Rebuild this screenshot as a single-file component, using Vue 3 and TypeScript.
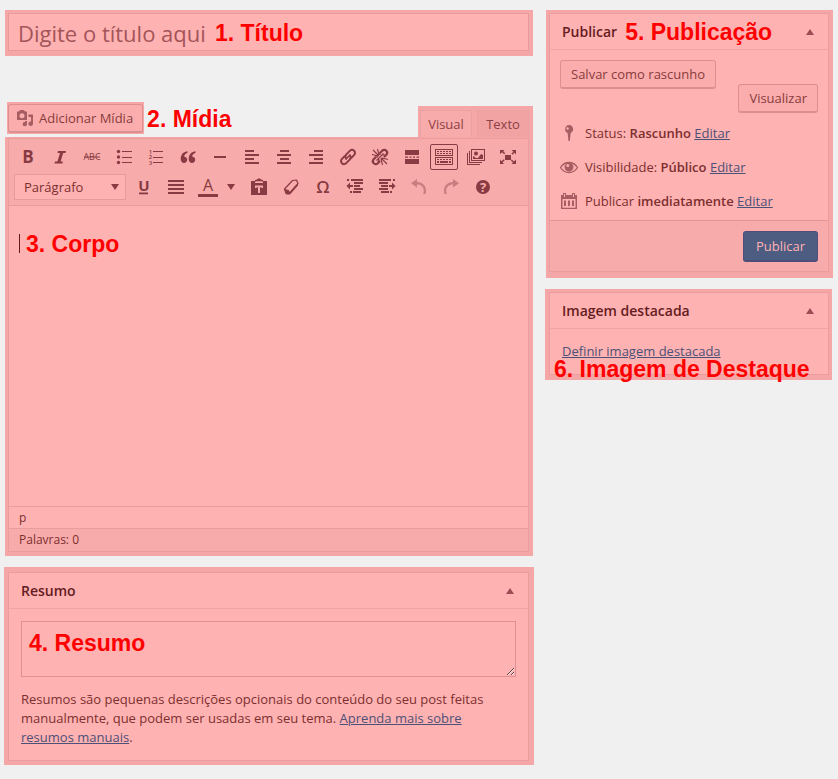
<script setup lang="ts">
import { ref } from 'vue'

interface Tool {
  label: string
  icon: string
  active?: boolean
  disabled?: boolean
}

const icons: Record<string, string> = {
  bold: '<text class="g" x="10" y="16" font-size="17" font-weight="700">B</text>',
  italic: '<path d="M8 4h8l-.5 2h-2.300l-2.600 8.500h2.300l-.5 2H4.500l.5-2h2.400L10 6H7.500z"/>',
  strike: '<text class="g" x="10" y="13" font-size="9">ABC</text><path d="M2 9.500h16v1H2z"/>',
  ul: '<circle cx="4.500" cy="4.500" r="1.700"/><circle cx="4.500" cy="10" r="1.700"/><circle cx="4.500" cy="15.500" r="1.700"/><path d="M8 4h10v1H8zM8 10h10v1H8zM8 15h10v1H8z"/>',
  ol: '<text class="g" x="4.500" y="6.500" font-size="6" font-weight="600">1</text><text class="g" x="4.500" y="12" font-size="6" font-weight="600">2</text><text class="g" x="4.500" y="18" font-size="6" font-weight="600">3</text><path d="M7 4h10v1H7zM7 10h10v1H7zM7 15h10v1H7z"/>',
  quote: '<path d="M9.500 4.200C6 4.500 2.700 7 2.700 11.800c0 2.700 1.400 4.200 3.300 4.200 1.800 0 3.200-1.300 3.200-3.200S7.900 9.700 6.300 9.700C6 8 7.400 6.300 9.500 5.900zM17.500 4.200c-3.500.3-6.800 2.800-6.800 7.600 0 2.700 1.400 4.200 3.300 4.200 1.800 0 3.200-1.300 3.200-3.200s-1.300-3.100-2.900-3.100c-.3-1.700 1.100-3.400 3.200-3.800z"/>',
  rule: '<path d="M4 9h12v2H4z"/>',
  left: '<path d="M3 3h9v2H3zM3 7h14v2H3zM3 11h9v2H3zM3 15h14v2H3z"/>',
  center: '<path d="M6 3h9v2H6zM3 7h14v2H3zM6 11h9v2H6zM3 15h14v2H3z"/>',
  right: '<path d="M8 3h9v2H8zM3 7h14v2H3zM8 11h9v2H8zM3 15h14v2H3z"/>',
  justify: '<path d="M2 3h16v2H2zM2 7h16v2H2zM2 11h16v2H2zM2 15h16v2H2z"/>',
  link: '<g fill="none" stroke="currentColor" stroke-width="2" stroke-linecap="round"><path d="M8.200 11.400c-1.400-1.400-1-2.900.1-4l3.500-3.500c1.300-1.300 3.100-1.300 4.300-.1s1.200 3-.1 4.300l-2.600 2.600"/><path d="M11.800 8.600c1.400 1.400 1 2.900-.1 4l-3.500 3.500c-1.300 1.300-3.100 1.300-4.300.1s-1.200-3 .1-4.300l2.600-2.600"/></g><path d="m7 12 5-5 1 1-5 5z"/>',
  unlink: '<g fill="none" stroke="currentColor" stroke-width="2.200" stroke-linecap="round"><path d="m10.500 5.500 1.700-1.700c1.200-1.200 3-1.200 4.100-.1s1.100 2.800 0 4.100l-1.700 1.700M9.500 14.500l-1.700 1.700c-1.200 1.200-3 1.200-4.100.1s-1.100-2.800 0-4.100l1.700-1.700"/></g><path d="M3 3l6 6M7.500 2l1.500 6M2 7.500l6 1.500M11 11l6 6M11 12l1.500 6M12 11l6 1.500M13.500 6.500l-7 7M9 12l-1 3M12 8l3 0M8 10H5M10 5v3" stroke="currentColor" stroke-width="1.100"/>',
  more: '<path d="M3 3h14v5H3zM3 12h14v5H3zM3 9.500h3v1.200H3zM7.500 9.500h2v1.200h-2zM11 9.500h2v1.200h-2zM14.500 9.500H17v1.200h-2.500z"/>',
  kitchen: '<path fill-rule="evenodd" d="M1 2h18v7H1zm1 1v5h16V3zM1 10h18v8H1zm1 1v6h16v-6z"/><path d="M3 4h2v1H3zM6 4h2v1H6zM9 4h2v1H9zM12 4h2v1h-2zM15 4h2v1h-2zM3 6h2v1H3zM6 6h2v1H6zM9 6h2v1H9zM12 6h2v1h-2zM15 6h2v1h-2zM3 12h2v1H3zM6 12h2v1H6zM9 12h2v1H9zM12 12h2v1h-2zM15 12h2v1h-2zM3 14h2v2H3zM6 14h8v2H6zM15 14h2v2h-2z"/>',
  gallery: '<path fill-rule="evenodd" d="M5 2h14v12H5zm1 1v10h12V3z"/><path d="M3 4h1v11h12v1H3zM1 6h1v11h12v1H1zM7 12V9l3 2h2l3-4 2 1v4z"/><circle cx="10" cy="6.500" r="2"/>',
  full: '<path d="M7 8h6v5H7zM2 3h4.500L5.200 4.300l2 2-1 1-2-2L2 7zM18 3v4.500l-1.600-1.700-2 2-1-1 2-2L13.500 3zM2 17v-4.500l1.500 1.700 2.200-2 1 1-2.200 2L6 17zM18 17h-4.500l1.500-1.500-2.200-2 1-1 2.200 2 2-2z"/>',
  underline: '<text class="g" x="10" y="14" font-size="15" font-weight="700">U</text><path d="M5 15.500h9v1.800H5z"/>',
  color: '<text class="g" x="10" y="14" font-size="16">A</text><path d="M0 17h20v3H0z"/>',
  paste: '<path d="M2 4h4V3l2-.5C8.300 1 11.700 1 12 2.500l2 .5v1h4v14H2z"/><path d="M6 6h8V4.800l-1.500-.5h-5L6 4.800zM6 8.500h8V11h-1.500v-.8H11V16H9v-5.800H7.500v.8H6z" fill="#f8abab"/>',
  eraser: '<path fill="none" stroke="currentColor" stroke-width="1.200" stroke-linejoin="round" d="M11.500 3.500 15.500 3 17 6.500 9 15.500 5 16.500 3.500 12z"/><path d="M3.500 12 7.800 13 9 15.500 16.500 7l.5 1.500-8 9H5.500z"/>',
  omega: '<text class="g" x="10" y="16" font-size="17" font-weight="600">Ω</text>',
  outdent: '<path d="M6 2h12v2H6zM9 5h9v2H9zM9 8h6v2H9zM9 11h9v2H9zM8 14h8v2H8zM1.500 9 5 5.500V8h3v2H5v2.500zM2 2h2v2H2zM5 14h2v2H5z"/>',
  indent: '<path d="M2 2h12v2H2zM2 5h9v2H2zM4 8h7v2H4zM2 11h9v2H2zM4 14h8v2H4zM18.500 9 15 5.500V8h-3v2h3v2.500zM16 2h2v2h-2zM13 14h2v2h-2z"/>',
  undo: '<path d="M8 2v3c5.500 0 9 3.500 9 9 0 1-.2 2-.5 3h-2.300c.4-1 .6-2 .6-3 0-4-2.500-6.500-6.800-6.500v3L2 6.300z"/>',
  redo: '<path d="M12 2v3c-5.500 0-9 3.500-9 9 0 1 .2 2 .5 3h2.300c-.4-1-.6-2-.6-3 0-4 2.500-6.500 6.800-6.500v3l6-4.200z"/>',
  help: '<circle cx="10" cy="10" r="7"/><text class="g" x="10" y="15" font-size="13" font-weight="700" fill="#f8abab">?</text>',
  pin: '<path fill-rule="evenodd" d="M10 2a4.200 4.200 0 0 1 1.700 8L10.800 18H9.500l-.9-8A4.200 4.200 0 0 1 10 2zM8.500 4.300a1.200 1.200 0 1 0 .1 2.400 1.200 1.200 0 0 0-.1-2.400z"/>',
  eye: '<path fill="none" stroke="currentColor" stroke-width="1.300" d="M1.500 10.500c2-3.200 5-5 8.500-5s6.500 1.800 8.500 5c-2 3.200-5 5-8.500 5s-6.500-1.800-8.500-5z"/><path fill-rule="evenodd" d="M10 5.600a4.500 4.500 0 1 1 0 9 4.500 4.500 0 0 1 0-9zM8.800 7a1.500 1.500 0 1 0 0 3 1.500 1.500 0 0 0 0-3z"/>',
  calendar: '<path fill-rule="evenodd" d="M2 4h2V2h3v2h6V2h3v2h2v14H2zm1.500 4v8.700h13V8zM5 3v3h1V3zm9 0v3h1V3z"/><path d="M5 9.500h2V15H5zM9 9.500h2V15H9zM13 9.500h2V15h-2z"/>',
  media: '<path fill-rule="evenodd" d="M2 3.500h2L5 2h4l1 1.500h2V12H2zm5 1.800A2.500 2.500 0 1 0 7 10.300 2.500 2.500 0 0 0 7 5.300z"/><path d="M13.500 6.500H18v9.300A2.300 2.300 0 1 1 16 13.500V9h-2.500zM12 13v3a2.200 2.200 0 1 1-2-2.100V13z"/>',
}

const rowOne: Tool[] = [
  { label: 'Negrito', icon: 'bold' },
  { label: 'Itálico', icon: 'italic' },
  { label: 'Tachado', icon: 'strike' },
  { label: 'Lista com marcadores', icon: 'ul' },
  { label: 'Lista numerada', icon: 'ol' },
  { label: 'Citação', icon: 'quote' },
  { label: 'Linha horizontal', icon: 'rule' },
  { label: 'Alinhar à esquerda', icon: 'left' },
  { label: 'Centralizar', icon: 'center' },
  { label: 'Alinhar à direita', icon: 'right' },
  { label: 'Inserir link', icon: 'link' },
  { label: 'Remover link', icon: 'unlink' },
  { label: 'Leia mais', icon: 'more' },
  { label: 'Alternar barra', icon: 'kitchen', active: true },
  { label: 'Galeria', icon: 'gallery' },
  { label: 'Tela cheia', icon: 'full' },
]
const rowTwoStart: Tool[] = [
  { label: 'Sublinhado', icon: 'underline' },
  { label: 'Justificar', icon: 'justify' },
  { label: 'Cor do texto', icon: 'color' },
]
const rowTwoEnd: Tool[] = [
  { label: 'Colar como texto', icon: 'paste' },
  { label: 'Limpar formatação', icon: 'eraser' },
  { label: 'Caractere especial', icon: 'omega' },
  { label: 'Diminuir recuo', icon: 'outdent' },
  { label: 'Aumentar recuo', icon: 'indent' },
  { label: 'Desfazer', icon: 'undo', disabled: true },
  { label: 'Refazer', icon: 'redo', disabled: true },
  { label: 'Ajuda', icon: 'help' },
]

const title = ref('')
const excerpt = ref('')
const format = ref('p')
const tab = ref<'visual' | 'texto'>('visual')

const statusRows = [
  { icon: 'pin', label: 'Status:', value: 'Rascunho' },
  { icon: 'eye', label: 'Visibilidade:', value: 'Público' },
  { icon: 'calendar', label: 'Publicar', value: 'imediatamente' },
]
</script>

<template>
  <div class="page">
    <main class="column">
      <section class="zone title-zone">
        <input v-model="title" class="title-input" type="text" aria-label="Título" placeholder="Digite o título aqui" />
        <strong class="note note-title">1. Título</strong>
      </section>

      <section class="editor">
        <div class="editor-head">
          <div class="media-zone">
            <button type="button" class="btn media-btn">
              <svg viewBox="0 0 20 20" class="icon" v-html="icons.media"></svg>Adicionar Mídia
            </button>
          </div>
          <strong class="note-inline">2. Mídia</strong>
          <div class="tabs">
            <button type="button" class="tab" :class="{ current: tab === 'visual' }" @click="tab = 'visual'">Visual</button>
            <button type="button" class="tab" :class="{ current: tab === 'texto' }" @click="tab = 'texto'">Texto</button>
          </div>
        </div>

        <div class="zone editor-zone">
          <div class="frame">
            <div class="toolbar">
              <div class="tool-row">
                <button v-for="t in rowOne" :key="t.icon" type="button" class="tool" :class="{ active: t.active }" :aria-label="t.label">
                  <svg viewBox="0 0 20 20" class="icon" v-html="icons[t.icon]"></svg>
                </button>
              </div>
              <div class="tool-row">
                <div class="format">
                  <select v-model="format" aria-label="Formato">
                    <option value="p">Parágrafo</option>
                    <option value="h1">Título 1</option>
                  </select>
                  <span class="caret-down"></span>
                </div>
                <button v-for="t in rowTwoStart" :key="t.icon" type="button" class="tool" :aria-label="t.label">
                  <svg viewBox="0 0 20 20" class="icon" v-html="icons[t.icon]"></svg>
                </button>
                <button type="button" class="tool-arrow" aria-label="Escolher cor"><span class="caret-down still"></span></button>
                <button v-for="t in rowTwoEnd" :key="t.icon" type="button" class="tool" :disabled="t.disabled" :aria-label="t.label">
                  <svg viewBox="0 0 20 20" class="icon" v-html="icons[t.icon]"></svg>
                </button>
              </div>
            </div>
            <div class="canvas">
              <span class="cursor"></span>
              <strong class="note-inline">3. Corpo</strong>
            </div>
            <div class="path">p</div>
            <div class="words">Palavras: 0</div>
          </div>
        </div>
      </section>

      <section class="zone excerpt-zone">
        <div class="frame">
          <header class="panel-head">
            <h2>Resumo</h2>
            <button type="button" class="toggle" aria-label="Recolher Resumo"></button>
          </header>
          <div class="excerpt">
            <textarea v-model="excerpt" aria-label="Resumo"></textarea>
            <strong class="note note-excerpt">4. Resumo</strong>
            <p>
              Resumos são pequenas descrições opcionais do conteúdo do seu post feitas manualmente, que podem ser usadas em seu
              tema. <a href="#resumos">Aprenda mais sobre resumos manuais</a>.
            </p>
          </div>
        </div>
      </section>
    </main>

    <aside class="column side">
      <section class="zone publish-zone">
        <div class="frame">
          <header class="panel-head">
            <h2>Publicar</h2>
            <strong class="note-inline">5. Publicação</strong>
            <button type="button" class="toggle" aria-label="Recolher Publicar"></button>
          </header>
          <div class="actions">
            <button type="button" class="btn draft">Salvar como rascunho</button>
            <button type="button" class="btn preview">Visualizar</button>
          </div>
          <ul class="status">
            <li v-for="s in statusRows" :key="s.icon">
              <svg viewBox="0 0 20 20" class="icon" v-html="icons[s.icon]"></svg>
              <span>{{ s.label }} <b>{{ s.value }}</b> <a href="#editar">Editar</a></span>
            </li>
          </ul>
          <footer class="publish-foot">
            <button type="button" class="primary">Publicar</button>
          </footer>
        </div>
      </section>

      <section class="zone image-zone">
        <div class="frame">
          <header class="panel-head">
            <h2>Imagem destacada</h2>
            <button type="button" class="toggle" aria-label="Recolher Imagem destacada"></button>
          </header>
          <div class="image-body"><a href="#imagem">Definir imagem destacada</a></div>
        </div>
        <strong class="note note-image">6. Imagem de Destaque</strong>
      </section>
    </aside>
  </div>
</template>

<style>
body {
  margin: 0;
  background: #f0f0f0;
}
svg .g {
  font-family: "Open Sans", sans-serif;
  text-anchor: middle;
}
</style>

<style scoped>
* {
  box-sizing: border-box;
}
.page {
  display: grid;
  grid-template-columns: minmax(0, 1fr) 288px;
  align-items: start;
  gap: 11px;
  padding: 10px 5px 14px 4px;
  font: 13px/19px "Open Sans", sans-serif;
  color: #7c2f2f;
}
button,
input,
select,
textarea {
  font: inherit;
  color: inherit;
  margin: 0;
}
.column {
  display: flex;
  flex-direction: column;
}
.side {
  gap: 11px;
}
.zone {
  position: relative;
  background: #f5a6a7;
  padding: 3px 4px 4px 3px;
}
.frame {
  border: 1px solid #e99d9d;
  background: #ffb2b2;
}
.icon {
  width: 20px;
  height: 20px;
  fill: currentColor;
  flex: none;
  display: block;
  overflow: visible;
}
a {
  color: #4d5077;
  text-decoration: underline;
}
.note,
.note-inline {
  font: bold 23px/26px "Liberation Sans", Arial, sans-serif;
  color: #fe0000;
  white-space: nowrap;
}
.note {
  position: absolute;
  pointer-events: none;
}
.note-title {
  left: 210px;
  top: 10px;
}
.note-excerpt {
  left: 20px;
  top: 21px;
}
.note-image {
  left: 9px;
  top: 67px;
}

.title-zone {
  margin: 0 1px;
  padding-bottom: 5px;
}
.title-input {
  display: block;
  width: 100%;
  height: 38px;
  padding: 2px 9px 0;
  border: 1px solid #e79b9b;
  border-radius: 0;
  background: #ffb2b2;
  font-size: 22px;
  outline: none;
}
.title-input::placeholder {
  color: #a35559;
  opacity: 1;
}

.editor {
  margin: 46px 1px 0;
}
.editor-head {
  display: flex;
  align-items: flex-start;
  height: 35px;
  padding-left: 2px;
}
.editor-head .note-inline {
  margin: 4px 0 0 3px;
}
.media-zone {
  background: #f5a6a7;
  padding: 2px 1px 1px;
}
.btn {
  border: 1px solid #db8f8f;
  border-bottom-width: 2px;
  border-radius: 3px;
  background: #fbadad;
  color: #883b3b;
  height: 29px;
  padding: 0 10px;
  white-space: nowrap;
}
.media-btn {
  display: flex;
  align-items: center;
  gap: 4px;
  padding: 0 9px 0 6px;
}
.media-btn .icon {
  color: #a75e62;
}
.tabs {
  display: flex;
  gap: 5px;
  align-self: flex-end;
  margin-left: auto;
  padding: 4px 4px 0 2px;
  background: #f5a6a7;
}
.tab {
  height: 27px;
  padding: 0 7px;
  border: 1px solid #eca0a0;
  border-bottom: 0;
  background: #f1a2a2;
  color: #8d4045;
  min-width: 52px;
}
.tab.current {
  background: #f8abab;
}
.editor-zone {
  padding-top: 1px;
}
.toolbar {
  background: #f8abab;
  border-bottom: 1px solid #e99d9d;
  padding: 3px;
}
.tool-row {
  display: flex;
  align-items: center;
  height: 30px;
}
.tool,
.tool-arrow {
  display: flex;
  align-items: center;
  justify-content: center;
  flex: none;
  width: 28px;
  height: 26px;
  margin: 0 2px;
  padding: 0;
  border: 1px solid transparent;
  border-radius: 2px;
  background: none;
  color: #883b42;
}
.tool.active {
  border-color: #883b42;
}
.tool:disabled {
  opacity: 0.4;
}
.tool-arrow {
  width: 19px;
  margin: 0;
  padding-right: 6px;
}
.format {
  position: relative;
  width: 112px;
  margin: 0 2px;
}
.format select {
  display: block;
  appearance: none;
  width: 100%;
  height: 26px;
  padding: 0 24px 0 9px;
  border: 1px solid #e79b9b;
  border-radius: 0;
  background: #ffb2b2;
}
.caret-down {
  position: absolute;
  right: 7px;
  top: 10px;
  border: 4px solid transparent;
  border-top: 6px solid #883b42;
  border-bottom: 0;
  pointer-events: none;
}
.caret-down.still {
  position: static;
}
.canvas {
  display: flex;
  align-items: flex-start;
  gap: 6px;
  height: 300px;
  padding: 25px 10px;
}
.cursor {
  width: 1px;
  height: 19px;
  margin-top: 3px;
  background: #651c1f;
}
.path,
.words {
  border-top: 1px solid #e99d9d;
  padding: 1px 10px;
  font-size: 12px;
  line-height: 20px;
}
.path {
  line-height: 19px;
}
.words {
  background: #f8abab;
}

.excerpt-zone {
  margin-top: 11px;
  padding: 5px 5px 4px 4px;
}
.panel-head {
  display: flex;
  align-items: center;
  height: 36px;
  padding: 0 12px;
  border-bottom: 1px solid #f1a4a4;
}
h2 {
  margin: 0;
  font-size: 14px;
  line-height: 20px;
  font-weight: 600;
  color: #651c1f;
}
.panel-head .note-inline {
  margin-left: 8px;
  line-height: 28px;
}
.toggle {
  margin-left: auto;
  width: 20px;
  height: 20px;
  margin-right: -4px;
  padding: 0;
  border: 0;
  background: none;
}
.toggle::before {
  content: "";
  display: block;
  width: 0;
  margin: 0 auto;
  border: 4px solid transparent;
  border-bottom: 6px solid #9c4c52;
  border-top: 0;
}
.excerpt {
  position: relative;
  padding: 12px 12px 13px;
}
textarea {
  display: block;
  width: 100%;
  height: 56px;
  border: 1px solid #e18f92;
  border-radius: 0;
  background: #ffb2b2;
  resize: vertical;
  outline: none;
}
p {
  margin: 13px 0 0;
}

.publish-zone {
  margin-left: 1px;
  padding: 3px 4px 6px 3px;
}
.actions {
  display: flex;
  justify-content: space-between;
  align-items: flex-start;
  padding: 10px;
}
.preview {
  margin-top: 24px;
}
.status {
  list-style: none;
  margin: 0;
  padding: 0 9px 2px;
}
.status li {
  display: flex;
  align-items: center;
  gap: 6px;
  height: 34px;
}
.status li:first-child {
  height: 20px;
  margin-bottom: 7px;
}
.status .icon {
  color: #a75e62;
}
.status b {
  font-weight: 600;
}
.publish-foot {
  display: flex;
  justify-content: flex-end;
  padding: 10px 10px 9px;
  background: #f8abab;
  border-top: 1px solid #e39696;
}
.primary {
  height: 31px;
  padding: 0 12px;
  border: 1px solid #4d4f7a;
  border-bottom-width: 2px;
  border-radius: 3px;
  background: #4d5d82;
  color: #ffb2b2;
}
.image-zone {
  margin-right: 1px;
  padding: 3px 3px 5px 4px;
}
.image-body {
  padding: 13px 12px;
}
</style>
